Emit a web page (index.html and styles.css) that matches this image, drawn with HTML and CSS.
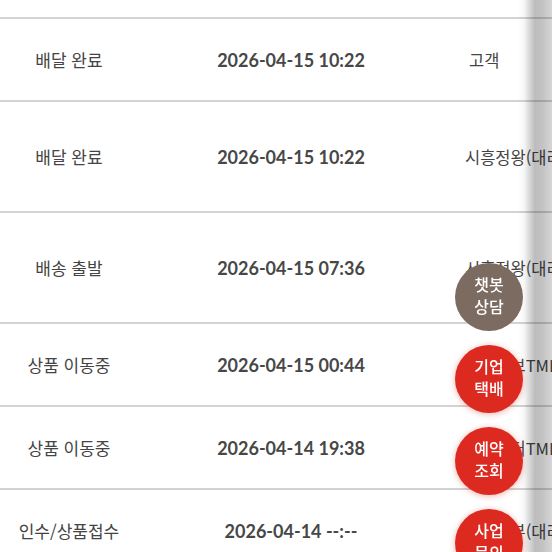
FILE: index.html
```html
<!DOCTYPE html>
<html lang="ko">
<head>
<meta charset="utf-8">
<link rel="stylesheet" href="styles.css">
</head>
<body>
<div class="list">
  <div class="row top"></div>
  <div class="row short">
    <div class="c1">배달 완료</div>
    <div class="c2">2026-04-15 10:22</div>
    <div class="c3 c3b">고객</div>
  </div>
  <div class="row tall">
    <div class="c1">배달 완료</div>
    <div class="c2">2026-04-15 10:22</div>
    <div class="c3">시흥정왕(대리점)</div>
  </div>
  <div class="row tall">
    <div class="c1">배송 출발</div>
    <div class="c2">2026-04-15 07:36</div>
    <div class="c3">시흥정왕(대리점)</div>
  </div>
  <div class="row short">
    <div class="c1">상품 이동중</div>
    <div class="c2">2026-04-15 00:44</div>
    <div class="c3">군포허브TML</div>
  </div>
  <div class="row short">
    <div class="c1">상품 이동중</div>
    <div class="c2">2026-04-14 19:38</div>
    <div class="c3">시흥센터TML</div>
  </div>
  <div class="row short">
    <div class="c1">인수/상품접수</div>
    <div class="c2">2026-04-14 --:--</div>
    <div class="c3">시흥서부(대리점)</div>
  </div>
</div>
<div class="edge"></div>
<div class="fabs">
  <div class="fab brown">챗봇<br>상담</div>
  <div class="fab red">기업<br>택배</div>
  <div class="fab red">예약<br>조회</div>
  <div class="fab red">사업<br>문의</div>
</div>
</body>
</html>
```
FILE: styles.css
```css
html, body {
  margin: 0;
  padding: 0;
  background: #ffffff;
  overflow: hidden;
  height: 552px;
}
body {
  font-family: "Noto Sans CJK KR", "Noto Sans", sans-serif;
  color: #444444;
}
.list {
  display: flex;
  flex-direction: column;
}
.row {
  display: grid;
  grid-template-columns: 138px 306px 1fr;
  align-items: center;
  box-sizing: border-box;
  border-top: 2px solid #d3d3d3;
}
.row.top {
  height: 17px;
  border-top: none;
}
.row.short { height: 83px; }
.row.tall { height: 111px; }
.c1 {
  text-align: center;
  font-size: 17px;
  white-space: nowrap;
}
.c2 {
  text-align: center;
  font-family: Lato, "Noto Sans", sans-serif;
  font-weight: 700;
  font-size: 18px;
  color: #474747;
  white-space: nowrap;
}
.c3 {
  font-size: 16.5px;
  white-space: nowrap;
  overflow: hidden;
  padding-left: 21px;
}
.c3b { padding-left: 25px; }
.edge {
  position: fixed;
  top: 0;
  right: 0;
  width: 34px;
  height: 552px;
  background: linear-gradient(to right,
    rgba(0,0,0,0) 0px,
    rgba(0,0,0,0.03) 6px,
    rgba(0,0,0,0.14) 11px,
    rgba(0,0,0,0.26) 17px,
    rgba(0,0,0,0.24) 24px,
    rgba(0,0,0,0.16) 34px);
}
.fabs {
  position: fixed;
  left: 455px;
  top: 263px;
  display: flex;
  flex-direction: column;
  gap: 14px;
}
.fab {
  width: 68px;
  height: 68px;
  border-radius: 50%;
  box-sizing: border-box;
  padding-bottom: 4px;
  display: flex;
  align-items: center;
  justify-content: center;
  text-align: center;
  color: #ffffff;
  font-size: 16px;
  font-weight: 500;
  line-height: 22px;
}
.brown {
  background: #7c6b61;
}
.red {
  background: #dd2a20;
  box-shadow: 0 1px 6px rgba(200, 30, 20, 0.35);
}
```
